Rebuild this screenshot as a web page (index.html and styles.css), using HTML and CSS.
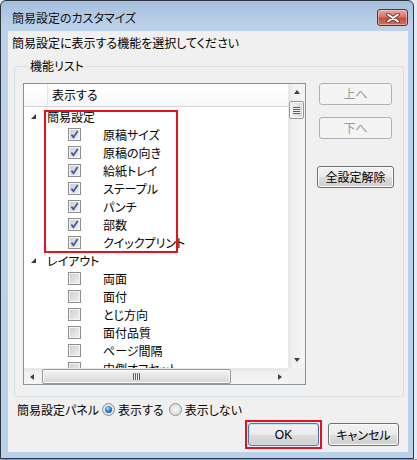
FILE: index.html
```html
<!DOCTYPE html>
<html lang="ja">

<head>
    <meta charset="UTF-8">
    <title>簡易設定のカスタマイズ</title>
    <link rel="stylesheet" href="styles.css">
</head>

<body>
    <div class="window">
        <div class="titlebar">
            <span class="title">簡易設定のカスタマイズ</span>
            <span class="close">
                <svg width="14" height="10" viewBox="0 0 14 10">
                    <path d="M2 1.5 L12 8.5 M12 1.5 L2 8.5" stroke="#6b3a33" stroke-width="3.8" stroke-linecap="round" fill="none"/>
                    <path d="M2 1.5 L12 8.5 M12 1.5 L2 8.5" stroke="#fff" stroke-width="2" stroke-linecap="round" fill="none"/>
                </svg>
            </span>
        </div>

        <div class="client">
            <p class="prompt">簡易設定に表示する機能を選択してください</p>

            <fieldset class="group">
                <legend>機能リスト</legend>
                <div class="group-body">
                    <div class="listbox">
                        <div class="list-view">
                            <div class="list-header">
                                <span class="hd-blank"></span>
                                <span class="hd-col">表示する</span>
                            </div>
                            <div class="rows">
                                <div class="row cat"><span class="expander"></span><span class="cat-text">簡易設定</span></div>
                                <div class="row item"><span class="check on"></span><span class="item-text">原稿サイズ</span></div>
                                <div class="row item"><span class="check on"></span><span class="item-text">原稿の向き</span></div>
                                <div class="row item"><span class="check on"></span><span class="item-text">給紙トレイ</span></div>
                                <div class="row item"><span class="check on"></span><span class="item-text">ステープル</span></div>
                                <div class="row item"><span class="check on"></span><span class="item-text">パンチ</span></div>
                                <div class="row item"><span class="check on"></span><span class="item-text">部数</span></div>
                                <div class="row item"><span class="check on"></span><span class="item-text">クイックプリント</span></div>
                                <div class="row cat"><span class="expander"></span><span class="cat-text">レイアウト</span></div>
                                <div class="row item"><span class="check"></span><span class="item-text">両面</span></div>
                                <div class="row item"><span class="check"></span><span class="item-text">面付</span></div>
                                <div class="row item"><span class="check"></span><span class="item-text">とじ方向</span></div>
                                <div class="row item"><span class="check"></span><span class="item-text">面付品質</span></div>
                                <div class="row item"><span class="check"></span><span class="item-text">ページ間隔</span></div>
                                <div class="row item"><span class="check"></span><span class="item-text">内側オフセット</span></div>
                            </div>
                            <div class="highlight"></div>
                        </div>

                        <div class="vscroll">
                            <span class="sb-btn"><span class="arrow-up"></span></span>
                            <span class="vthumb"><span class="grip-h"></span></span>
                            <span class="sb-fill"></span>
                            <span class="sb-btn"><span class="arrow-down"></span></span>
                        </div>
                        <div class="hscroll">
                            <span class="sb-btn"><span class="arrow-left"></span></span>
                            <span class="hthumb"><span class="grip-v"></span></span>
                            <span class="sb-fill"></span>
                            <span class="sb-btn"><span class="arrow-right"></span></span>
                        </div>
                        <div class="corner"></div>
                    </div>

                    <div class="side-buttons">
                        <button class="btn side disabled">上へ</button>
                        <button class="btn side disabled down">下へ</button>
                        <button class="btn side clear">全設定解除</button>
                    </div>
                </div>
            </fieldset>

            <div class="panel-row">
                <span class="panel-label">簡易設定パネル</span>
                <span class="radio on"><span class="dot"></span></span>
                <span class="radio-text">表示する</span>
                <span class="radio"></span>
                <span class="radio-text">表示しない</span>
            </div>

            <div class="dialog-buttons">
                <span class="ok-mark"><button class="btn dlg ok">OK</button></span>
                <button class="btn dlg">キャンセル</button>
            </div>
        </div>
    </div>
</body>

</html>
```

FILE: styles.css
```css
* {
    padding: 0;
    margin: 0;
    box-sizing: border-box;
}

html,
body {
    width: 417px;
    height: 460px;
    overflow: hidden;
}

body {
    background: linear-gradient(to bottom, #e2ebf4 459px, #2cc3e2 459px);
    font-family: "Noto Sans CJK JP", "Liberation Sans", sans-serif;
    font-size: 12px;
    font-feature-settings: "palt";
    color: #000;
}

.window {
    width: 414px;
    height: 459px;
    border: 1px solid #2f3640;
    border-radius: 6px 6px 0 0;
    background: linear-gradient(to bottom, #a6bfdd 0, #bcd2eb 26px, #b9d1ea 100%);
    display: flex;
    flex-direction: column;
}

/* title bar */
.titlebar {
    height: 30px;
    padding: 3px 5px 0 11px;
    display: flex;
    align-items: center;
    justify-content: space-between;
}

.title {
    font-size: 12px;
    line-height: 16px;
    color: #111;
}

.close {
    width: 31px;
    height: 17px;
    border: 1px solid #6f2b22;
    border-radius: 3px;
    background: linear-gradient(to bottom, #e9a99a 0%, #d47767 45%, #c24d3c 55%, #cf7260 100%);
    box-shadow: inset 0 0 0 1px rgba(255, 220, 210, 0.5);
    display: flex;
    align-items: center;
    justify-content: center;
}

/* client area */
.client {
    width: 400px;
    height: 421px;
    margin-left: 7px;
    background-color: #f0f0f0;
    display: flex;
    flex-direction: column;
}

.prompt {
    line-height: 16px;
    padding: 4px 4px 0;
}

.group {
    margin: 7px 0 0 6px;
    width: 390px;
    border: 1px solid #d5dfe5;
    border-radius: 3px;
    padding: 9px 8px 11px;
}

.group legend {
    margin-left: 5px;
    padding: 0 2px;
    line-height: 16px;
}

.group-body {
    display: flex;
    align-items: flex-start;
}

/* list view */
.listbox {
    width: 283px;
    height: 302px;
    border: 1px solid #8d9097;
    display: grid;
    grid-template-columns: 264px 17px;
    grid-template-rows: 284px 16px;
    background-color: #fff;
}

.list-view {
    position: relative;
    overflow: hidden;
}

.list-header {
    height: 23px;
    display: flex;
    background: linear-gradient(to bottom, #ffffff, #f7f8f9);
    border-bottom: 1px solid #d5d5d5;
}

.hd-blank {
    width: 24px;
    border-right: 1px solid #e5e5e5;
}

.hd-col {
    flex: 1;
    padding-left: 4px;
    line-height: 22px;
}

.rows {
    height: 261px;
    overflow: hidden;
}

.row {
    height: 18px;
    display: flex;
    align-items: center;
    white-space: nowrap;
}

.expander {
    width: 0;
    height: 0;
    margin-left: 7px;
    border-style: solid;
    border-width: 0 0 5px 5px;
    border-color: transparent transparent #3a3a3a transparent;
}

.cat-text {
    margin-left: 11px;
}

.check {
    width: 13px;
    height: 13px;
    margin-left: 44px;
    border: 1px solid #8e8f8f;
    background: linear-gradient(135deg, #cbcbcb, #f3f3f3);
    box-shadow: inset 0 0 0 1px #f4f4f4;
}

.check.on {
    background:
        url("data:image/svg+xml;utf8,<svg xmlns='http://www.w3.org/2000/svg' width='11' height='11'><path d='M2.4 5.6 L4.5 8.2 L8.7 2' stroke='%233a5aa6' stroke-width='1.7' fill='none'/></svg>") center / 11px 11px no-repeat,
        linear-gradient(135deg, #cbcbcb, #f3f3f3);
}

.item-text {
    margin-left: 22px;
}

.highlight {
    position: absolute;
    left: 20px;
    top: 26px;
    width: 134px;
    height: 143px;
    border: 2px solid #e8101c;
}

/* scroll bars */
.vscroll {
    display: flex;
    flex-direction: column;
    background: linear-gradient(to right, #e4e4e4, #f0f0f0 3px, #f5f5f5);
    border-left: 1px solid #eaeaea;
}

.hscroll {
    display: flex;
    background: linear-gradient(to bottom, #e4e4e4, #f0f0f0 3px, #f5f5f5);
    border-top: 1px solid #eaeaea;
}

.sb-btn {
    width: 16px;
    height: 16px;
    display: flex;
    align-items: center;
    justify-content: center;
    flex-shrink: 0;
}

.sb-fill {
    flex: 1;
}

.arrow-up,
.arrow-down,
.arrow-left,
.arrow-right {
    width: 0;
    height: 0;
    border-style: solid;
    border-color: transparent;
}

.arrow-up {
    border-width: 0 3.5px 4px;
    border-bottom-color: #404040;
}

.arrow-down {
    border-width: 4px 3.5px 0;
    border-top-color: #404040;
}

.arrow-left {
    border-width: 3.5px 4px 3.5px 0;
    border-right-color: #404040;
}

.arrow-right {
    border-width: 3.5px 0 3.5px 4px;
    border-left-color: #404040;
}

.vthumb {
    width: 15px;
    height: 18px;
    margin: 1px 0 0 0;
    border: 1px solid #979797;
    border-radius: 2px;
    background: linear-gradient(to right, #f4f4f4, #e6e6e6 50%, #d5d5d5);
    box-shadow: inset 0 0 0 1px #fbfbfb;
    display: flex;
    align-items: center;
    justify-content: center;
}

.grip-h {
    width: 7px;
    height: 7px;
    background: repeating-linear-gradient(to bottom, #5f5f5f 0, #5f5f5f 1px, #f1f1f1 1px, #f1f1f1 2px);
}

.hthumb {
    width: 189px;
    height: 15px;
    margin-left: 2px;
    border: 1px solid #979797;
    border-radius: 2px;
    background: linear-gradient(to bottom, #f4f4f4, #e6e6e6 50%, #d5d5d5);
    box-shadow: inset 0 0 0 1px #fbfbfb;
    display: flex;
    align-items: center;
    justify-content: center;
}

.grip-v {
    width: 7px;
    height: 7px;
    background: repeating-linear-gradient(to right, #5f5f5f 0, #5f5f5f 1px, #f1f1f1 1px, #f1f1f1 2px);
}

.corner {
    background-color: #f0f0f0;
}

/* buttons */
.btn {
    font-family: "Noto Sans CJK JP", "Liberation Sans", sans-serif;
    font-size: 12px;
    font-feature-settings: "palt";
    color: #000;
    border: 1px solid #707070;
    border-radius: 3px;
    background: linear-gradient(to bottom, #f2f2f2 0%, #ebebeb 50%, #dddddd 50%, #cfcfcf 100%);
    box-shadow: inset 0 0 0 1px #fcfcfc;
    line-height: 18px;
}

.side-buttons {
    width: 77px;
    margin-left: 11px;
    display: flex;
    flex-direction: column;
    align-items: center;
}

.btn.side {
    width: 73px;
    height: 22px;
}

.btn.disabled {
    color: #9a9a9a;
    border-color: #adb2b5;
    background: #f4f4f4;
    box-shadow: none;
}

.btn.down {
    margin-top: 12px;
}

.btn.clear {
    width: 77px;
    margin-top: 27px;
}

.panel-row {
    margin-top: 4px;
    padding-left: 9px;
    height: 16px;
    display: flex;
    align-items: center;
}

.panel-label {
    margin-right: 2px;
}

.radio {
    width: 13px;
    height: 13px;
    margin: 0 3px 0 1px;
    border: 1px solid #8e8f8f;
    border-radius: 50%;
    background: radial-gradient(circle at 50% 50%, #f6f6f6, #d4d4d4);
    display: flex;
    align-items: center;
    justify-content: center;
}

.radio .dot {
    width: 7px;
    height: 7px;
    border-radius: 50%;
    background: radial-gradient(circle at 40% 35%, #a6e3ff 0, #2d86d0 45%, #0c3f7c 100%);
}

.radio-text {
    margin-right: 4px;
}

.dialog-buttons {
    margin-top: 3px;
    padding-right: 9px;
    display: flex;
    justify-content: flex-end;
    align-items: center;
}

.ok-mark {
    border: 2px solid #e8101c;
    padding: 1px;
    margin-right: 6px;
    display: flex;
}

.btn.dlg {
    width: 71px;
    height: 23px;
}

.btn.ok {
    font-family: "Liberation Sans", sans-serif;
    border-color: #3c7fb1;
    box-shadow: inset 0 0 0 1px #c6e4f6;
}
```
